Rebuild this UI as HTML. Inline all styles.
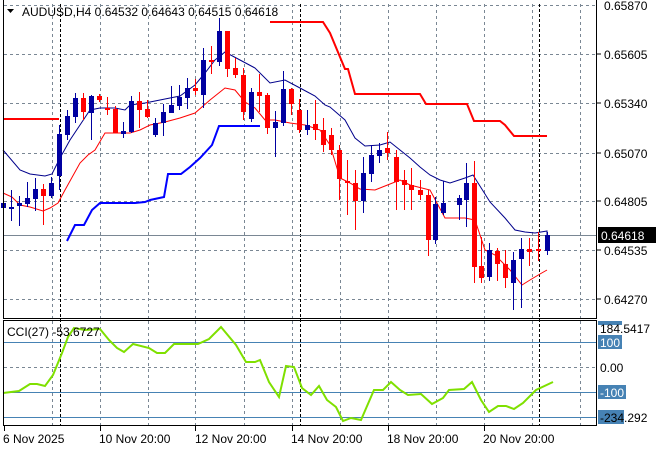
<!DOCTYPE html>
<html><head><meta charset="utf-8"><style>
html,body{margin:0;padding:0;background:#fff;}
svg{display:block;font-family:"Liberation Sans",sans-serif;}
</style></head><body>
<svg width="660" height="450" viewBox="0 0 660 450" xmlns="http://www.w3.org/2000/svg">
<rect width="660" height="450" fill="#fff"/>
<!-- grid main -->
<g stroke="#7a8794" stroke-width="1" stroke-dasharray="3,3" fill="none">
<path d="M52.5 4V318M100.5 4V318M148.5 4V318M195.5 4V318M244.5 4V318M292.5 4V318M340.5 4V318M388.5 4V318M436.5 4V318M484.5 4V318M532.5 4V318M580.5 4V318"/>
<path d="M4 5.5H596M4 54.5H596M4 103.5H596M4 153.5H596M4 201.5H596M4 250.5H596M4 299.5H596"/>
<path d="M52.5 321V425M100.5 321V425M148.5 321V425M195.5 321V425M244.5 321V425M292.5 321V425M340.5 321V425M388.5 321V425M436.5 321V425M484.5 321V425M532.5 321V425M580.5 321V425"/>
<path d="M4 367.5H596"/>
</g>
<g stroke="#000" stroke-width="1" stroke-dasharray="3,2">
<path d="M60.5 4V425M300.5 4V425M539.5 4V425"/>
</g>
<path d="M4 235.5H596" stroke="#7a8794" stroke-width="1"/>
<g stroke="#4682b4" stroke-width="1"><path d="M4 342.5H596M4 392.5H596M4 417.5H596"/></g>
<!-- red stepped -->
<polyline fill="none" stroke="#ff0000" stroke-width="2" points="4,119 59,119"/>
<polyline fill="none" stroke="#ff0000" stroke-width="2" points="270,22 323,22 330,33 345,69 348,69 355,94 420,94 426,104 467,104 474,121 500,121 505,125 514,136 547,136"/>
<!-- blue stepped -->
<polyline fill="none" stroke="#0000ff" stroke-width="2" points="67,241 75,225 84,225 92,210 100,203 135,203 145,202 150,200 164,197 168,174 181,174 190,167 200,158 212,145 219,126 260,126"/>
<!-- navy MA -->
<polyline fill="none" stroke="#00008b" stroke-width="1" points="3,150 20,170 30,174 45,176 52,174 60,158 70,140 80,125 90,110 100,108 115,108 125,110 130,105 145,103 160,100 170,98 180,96 195,85 205,73 215,60 225,52 240,60 255,68 270,83 285,80 300,88 315,96 325,105 330,107 345,120 355,138 365,146 380,145 390,142 400,150 410,158 420,167 430,175 440,180 450,183 465,178 473,175 490,202 505,218 515,230 525,232 535,233 547,231 547,236"/>
<!-- red MA -->
<polyline fill="none" stroke="#ff0000" stroke-width="1" points="3,193 12,197 20,205 30,207 43,211 50,208 58,203 65,190 80,163 88,155 95,150 105,133 130,133 140,130 150,125 165,122 180,118 195,113 210,100 225,88 235,90 245,102 255,108 265,120 275,120 290,123 305,125 320,130 330,145 340,178 350,183 360,189 375,190 385,186 400,180 410,185 430,190 445,218 465,218 475,220 485,250 495,255 510,270 522,285 530,280 540,274 547,270"/>
<!-- candles -->
<g id="c" shape-rendering="crispEdges">
<g stroke="#0000a0" fill="#0000a0">
<path d="M3.5 186V218M11.5 190V221M19.5 196V226M27.5 182V207M35.5 178V211M51.5 177V198M59.5 125V190M67.5 110V140M75.5 93V123M91.5 95V140M123.5 122V138M131.5 96V133M155.5 118V137M163.5 104V136M171.5 86V110M179.5 85V110M187.5 78V109M203.5 48V108M219.5 18V66M251.5 88V122M275.5 111V157M283.5 71V126M307.5 110V135M363.5 157V213M371.5 145V182M379.5 143V163M435.5 197V244M443.5 181V215M459.5 195V220M466.5 163V227M489.5 243V281M513.5 252V310M521.5 238V308M547.5 232V255"/>
</g>
<g fill="#0000a0">
<rect x="1" y="203" width="5" height="5"/><rect x="9" y="207" width="5" height="2"/><rect x="17" y="203" width="5" height="3"/><rect x="25" y="198" width="5" height="6"/><rect x="33" y="189" width="5" height="10"/><rect x="49" y="183" width="5" height="13"/><rect x="57" y="134" width="5" height="42"/><rect x="65" y="116" width="5" height="19"/><rect x="73" y="98" width="5" height="19"/><rect x="89" y="96" width="5" height="17"/><rect x="121" y="131" width="5" height="3"/><rect x="129" y="101" width="5" height="31"/><rect x="153" y="123" width="5" height="12"/><rect x="161" y="112" width="5" height="11"/><rect x="169" y="105" width="5" height="8"/><rect x="177" y="97" width="5" height="9"/><rect x="185" y="88" width="5" height="10"/><rect x="201" y="60" width="5" height="35"/><rect x="217" y="31" width="5" height="31"/><rect x="249" y="92" width="5" height="27"/><rect x="273" y="122" width="5" height="6"/><rect x="281" y="89" width="5" height="34"/><rect x="305" y="125" width="5" height="5"/><rect x="361" y="173" width="5" height="28"/><rect x="369" y="155" width="5" height="19"/><rect x="377" y="150" width="5" height="6"/><rect x="433" y="204" width="5" height="36"/><rect x="441" y="203" width="5" height="10"/><rect x="457" y="198" width="5" height="7"/><rect x="464" y="183" width="5" height="17"/><rect x="487" y="250" width="5" height="27"/><rect x="511" y="260" width="5" height="23"/><rect x="519" y="249" width="5" height="10"/><rect x="545" y="235" width="5" height="16"/>
</g>
<g stroke="#ff0000">
<path d="M43.5 184V225M83.5 93V120M99.5 94V102M107.5 97V115M115.5 106V133M139.5 92V128M147.5 100V118M195.5 79V95M211.5 46V74M227.5 31V77M235.5 58V78M243.5 68V120M259.5 74V112M267.5 93V134M291.5 88V115M299.5 99V133M315.5 100V140M323.5 118V152M331.5 128V155M339.5 145V200M347.5 160V215M355.5 170V230M387.5 132V160M396.5 150V210M404.5 170V210M411.5 168V210M420.5 180V200M428.5 190V256M474.5 161V283M481.5 237V283M497.5 248V281M505.5 250V288M529.5 238V266M538.5 232V261"/>
</g>
<g fill="#ff0000">
<rect x="41" y="189" width="5" height="7"/><rect x="81" y="98" width="5" height="14"/><rect x="97" y="96" width="5" height="4"/><rect x="105" y="108" width="5" height="2"/><rect x="113" y="109" width="5" height="24"/><rect x="137" y="101" width="5" height="9"/><rect x="145" y="109" width="5" height="8"/><rect x="193" y="88" width="5" height="3"/><rect x="209" y="60" width="5" height="2"/><rect x="225" y="31" width="5" height="38"/><rect x="233" y="68" width="5" height="7"/><rect x="241" y="75" width="5" height="37"/><rect x="257" y="92" width="5" height="4"/><rect x="265" y="95" width="5" height="33"/><rect x="289" y="89" width="5" height="15"/><rect x="297" y="110" width="5" height="20"/><rect x="313" y="124" width="5" height="6"/><rect x="321" y="130" width="5" height="15"/><rect x="329" y="135" width="5" height="15"/><rect x="337" y="150" width="5" height="29"/><rect x="345" y="181" width="5" height="2"/><rect x="353" y="183" width="5" height="18"/><rect x="385" y="148" width="5" height="5"/><rect x="394" y="157" width="5" height="25"/><rect x="402" y="180" width="5" height="5"/><rect x="409" y="185" width="5" height="5"/><rect x="418" y="190" width="5" height="5"/><rect x="426" y="195" width="5" height="45"/><rect x="472" y="183" width="5" height="84"/><rect x="479" y="266" width="5" height="12"/><rect x="495" y="251" width="5" height="13"/><rect x="503" y="264" width="5" height="14"/><rect x="527" y="249" width="5" height="3"/><rect x="536" y="249" width="5" height="2"/>
</g>
</g>
<!-- CCI line -->
<polyline fill="none" stroke="#7fe000" stroke-width="2" points="3,393 19,391 30,384 37,384 45,386 53,375 62,353 68,337 74,328 85,330 100,329 109,340 117,348 124,352 133,344 149,348 157,353 165,353 174,344 198,344 209,339 221,327 236,345 246,362 255,362 260,360 269,382 279,397 286,366 294,367 302,388 311,395 319,386 327,400 336,407 343,421 351,418 361,420 374,390 383,390 391,382 400,390 408,395 421,394 432,404 443,398 449,390 464,389 472,382 481,400 489,412 498,406 506,406 514,409 523,403 536,390 553,382"/>
<!-- frames -->
<g fill="none" stroke="#000" stroke-width="1">
<path d="M3.5 0V318.5H596.5V0"/>
<path d="M3.5 320.5H596.5V425.5H3.5Z"/>
<path d="M4.5 425V431M100.5 425V431M195.5 425V431M292.5 425V431M388.5 425V431M484.5 425V431M596.5 5V1M596.5 54H601M596.5 103H601M596.5 153H601M596.5 201H601M596.5 250H601M596.5 299H601"/>
</g>
<!-- texts -->
<g font-size="12" fill="#000">
<path d="M7 9L14 9L10.5 13Z" fill="#000"/>
<text x="22" y="16">AUDUSD,H4  0.64532 0.64643 0.64515 0.64618</text>
<text x="604" y="10">0.65870</text>
<text x="604" y="59">0.65605</text>
<text x="604" y="108">0.65340</text>
<text x="604" y="158">0.65070</text>
<text x="604" y="206">0.64805</text>
<text x="604" y="255">0.64535</text>
<text x="604" y="304">0.64270</text>
<rect x="598" y="227" width="58" height="16" fill="#000"/>
<text x="601" y="240" fill="#fff">0.64618</text>
<text x="7" y="336">CCI(27) -53.6727</text>
<rect x="598" y="321" width="24" height="4" fill="#4682b4"/>
<text x="600" y="333">184.5417</text>
<rect x="598" y="335" width="24" height="14" fill="#4682b4"/>
<text x="600" y="347" fill="#fff">100</text>
<text x="600" y="372">0.00</text>
<rect x="598" y="385" width="28" height="14" fill="#4682b4"/>
<text x="600" y="397" fill="#fff">-100</text>
<rect x="598" y="410" width="26" height="14" fill="#4682b4"/>
<text x="600" y="422">-234.292</text>
<text x="3" y="443">6 Nov 2025</text>
<text x="99" y="443">10 Nov 20:00</text>
<text x="195" y="443">12 Nov 20:00</text>
<text x="291" y="443">14 Nov 20:00</text>
<text x="387" y="443">18 Nov 20:00</text>
<text x="483" y="443">20 Nov 20:00</text>
</g>
</svg>
</body></html>
